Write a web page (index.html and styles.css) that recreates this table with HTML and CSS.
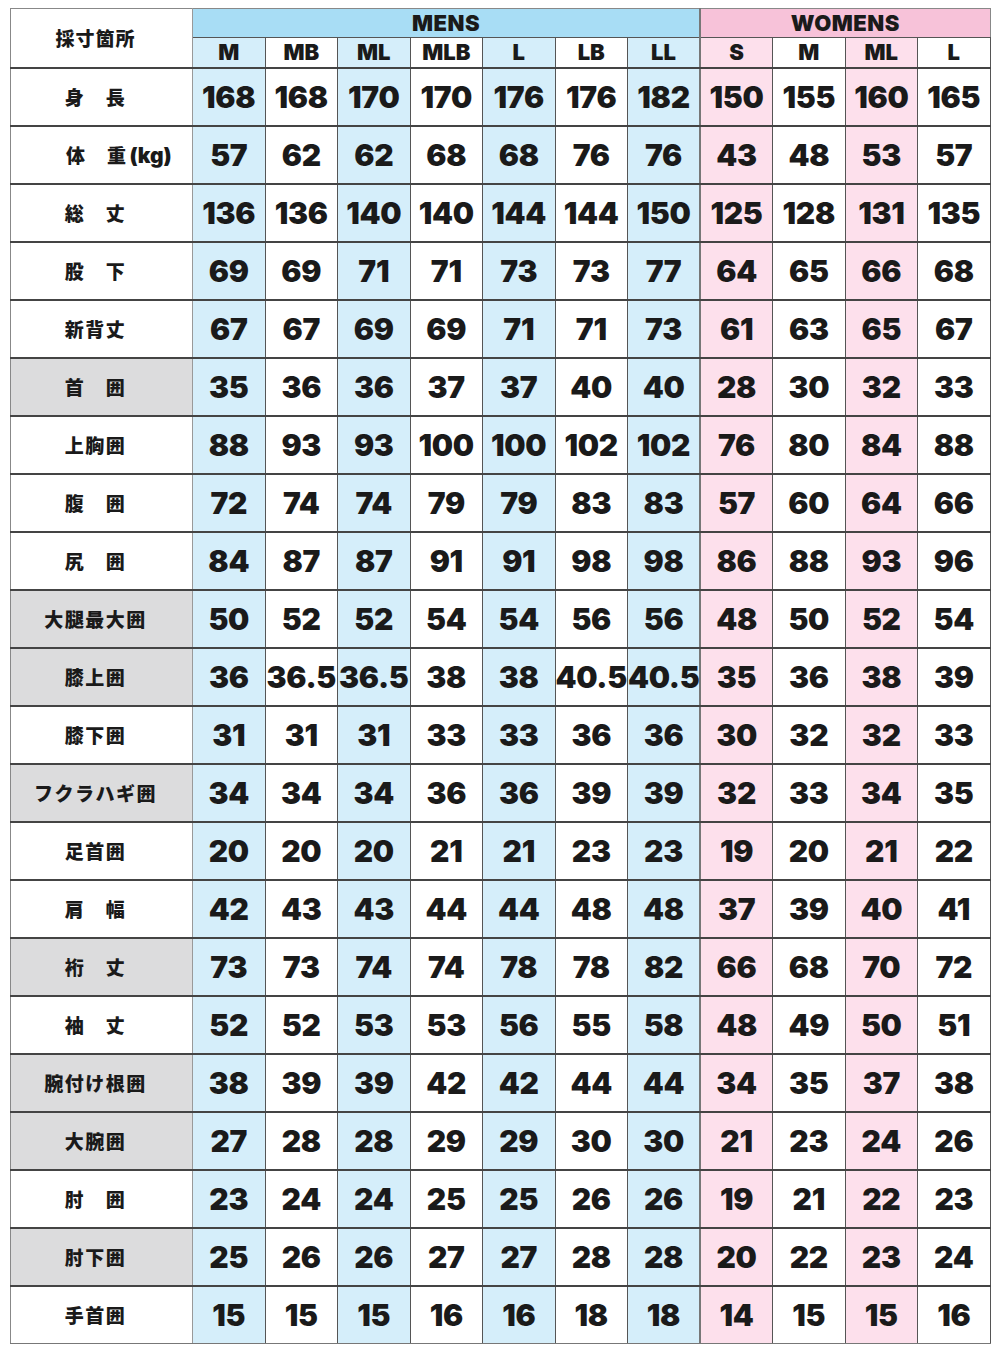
FILE: index.html
```html
<!DOCTYPE html>
<html lang="ja">
<head>
<meta charset="utf-8">
<title>サイズ表</title>
<link rel="stylesheet" href="styles.css">
</head>
<body>
<table class="size-table">
  <colgroup>
    <col class="c-label">
    <col span="11" class="c-size">
  </colgroup>
  <thead>
    <tr class="group-row">
      <th rowspan="2" class="corner">採寸箇所</th>
      <th colspan="7" class="mens">MENS</th>
      <th colspan="4" class="womens">WOMENS</th>
    </tr>
    <tr class="size-row">
      <th>M</th><th>MB</th><th>ML</th><th>MLB</th><th>L</th><th>LB</th><th>LL</th>
      <th>S</th><th>M</th><th>ML</th><th>L</th>
    </tr>
  </thead>
  <tbody>
    <tr><th>身　長</th><td>168</td><td>168</td><td>170</td><td>170</td><td>176</td><td>176</td><td>182</td><td>150</td><td>155</td><td>160</td><td>165</td></tr>
    <tr><th class="weight">体　重<span class="unit">(kg)</span></th><td>57</td><td>62</td><td>62</td><td>68</td><td>68</td><td>76</td><td>76</td><td>43</td><td>48</td><td>53</td><td>57</td></tr>
    <tr><th>総　丈</th><td>136</td><td>136</td><td>140</td><td>140</td><td>144</td><td>144</td><td>150</td><td>125</td><td>128</td><td>131</td><td>135</td></tr>
    <tr><th>股　下</th><td>69</td><td>69</td><td>71</td><td>71</td><td>73</td><td>73</td><td>77</td><td>64</td><td>65</td><td>66</td><td>68</td></tr>
    <tr><th>新背丈</th><td>67</td><td>67</td><td>69</td><td>69</td><td>71</td><td>71</td><td>73</td><td>61</td><td>63</td><td>65</td><td>67</td></tr>
    <tr class="grey"><th>首　囲</th><td>35</td><td>36</td><td>36</td><td>37</td><td>37</td><td>40</td><td>40</td><td>28</td><td>30</td><td>32</td><td>33</td></tr>
    <tr><th>上胸囲</th><td>88</td><td>93</td><td>93</td><td>100</td><td>100</td><td>102</td><td>102</td><td>76</td><td>80</td><td>84</td><td>88</td></tr>
    <tr><th>腹　囲</th><td>72</td><td>74</td><td>74</td><td>79</td><td>79</td><td>83</td><td>83</td><td>57</td><td>60</td><td>64</td><td>66</td></tr>
    <tr><th>尻　囲</th><td>84</td><td>87</td><td>87</td><td>91</td><td>91</td><td>98</td><td>98</td><td>86</td><td>88</td><td>93</td><td>96</td></tr>
    <tr class="grey"><th>大腿最大囲</th><td>50</td><td>52</td><td>52</td><td>54</td><td>54</td><td>56</td><td>56</td><td>48</td><td>50</td><td>52</td><td>54</td></tr>
    <tr class="grey"><th>膝上囲</th><td>36</td><td>36.5</td><td>36.5</td><td>38</td><td>38</td><td>40.5</td><td>40.5</td><td>35</td><td>36</td><td>38</td><td>39</td></tr>
    <tr><th>膝下囲</th><td>31</td><td>31</td><td>31</td><td>33</td><td>33</td><td>36</td><td>36</td><td>30</td><td>32</td><td>32</td><td>33</td></tr>
    <tr class="grey"><th>フクラハギ囲</th><td>34</td><td>34</td><td>34</td><td>36</td><td>36</td><td>39</td><td>39</td><td>32</td><td>33</td><td>34</td><td>35</td></tr>
    <tr><th>足首囲</th><td>20</td><td>20</td><td>20</td><td>21</td><td>21</td><td>23</td><td>23</td><td>19</td><td>20</td><td>21</td><td>22</td></tr>
    <tr><th>肩　幅</th><td>42</td><td>43</td><td>43</td><td>44</td><td>44</td><td>48</td><td>48</td><td>37</td><td>39</td><td>40</td><td>41</td></tr>
    <tr class="grey"><th>裄　丈</th><td>73</td><td>73</td><td>74</td><td>74</td><td>78</td><td>78</td><td>82</td><td>66</td><td>68</td><td>70</td><td>72</td></tr>
    <tr><th>袖　丈</th><td>52</td><td>52</td><td>53</td><td>53</td><td>56</td><td>55</td><td>58</td><td>48</td><td>49</td><td>50</td><td>51</td></tr>
    <tr class="grey"><th>腕付け根囲</th><td>38</td><td>39</td><td>39</td><td>42</td><td>42</td><td>44</td><td>44</td><td>34</td><td>35</td><td>37</td><td>38</td></tr>
    <tr class="grey"><th>大腕囲</th><td>27</td><td>28</td><td>28</td><td>29</td><td>29</td><td>30</td><td>30</td><td>21</td><td>23</td><td>24</td><td>26</td></tr>
    <tr><th>肘　囲</th><td>23</td><td>24</td><td>24</td><td>25</td><td>25</td><td>26</td><td>26</td><td>19</td><td>21</td><td>22</td><td>23</td></tr>
    <tr class="grey"><th>肘下囲</th><td>25</td><td>26</td><td>26</td><td>27</td><td>27</td><td>28</td><td>28</td><td>20</td><td>22</td><td>23</td><td>24</td></tr>
    <tr><th>手首囲</th><td>15</td><td>15</td><td>15</td><td>16</td><td>16</td><td>18</td><td>18</td><td>14</td><td>15</td><td>15</td><td>16</td></tr>
  </tbody>
</table>
</body>
</html>
```
FILE: styles.css
```css
html, body {
  margin: 0;
  padding: 0;
  background: #ffffff;
}

body {
  padding: 8px 0 0 10px;
  color: #1a1a1a;
  font-family: "Inter", "DejaVu Sans", sans-serif;
}

.size-table {
  border-collapse: collapse;
  table-layout: fixed;
  width: 980px;
  border: 1px solid #888;
}

.c-label { width: 182px; }
.c-size { width: 72.5px; }

.size-table th,
.size-table td {
  padding: 0;
  text-align: center;
  vertical-align: middle;
  border-right: 1px solid #555;
  border-bottom: 2px solid #444;
}

/* header */
.group-row { height: 29px; }
.size-row { height: 30px; }

.size-table .corner {
  background: #fff;
  font-family: "Noto Sans CJK JP", sans-serif;
  font-weight: 900;
  font-size: 19px;
  letter-spacing: 1px;
  padding-right: 12px;
  border-right: 1px solid #999;
}

.size-table .mens,
.size-table .womens {
  font-weight: 900;
  font-size: 22px;
  letter-spacing: 0.5px;
  border-bottom: 1px solid #555;
}
.size-table .mens { background: #a8ddf5; border-right: 2px solid #777; }
.size-table .womens { background: #f7c2d9; border-right: 1px solid #888; }

.size-row th {
  font-weight: 900;
  font-size: 22px;
  background: #fff;
}
.size-row th:nth-child(1),
.size-row th:nth-child(3),
.size-row th:nth-child(5),
.size-row th:nth-child(7) { background: #d5eefa; }
.size-row th:nth-child(8),
.size-row th:nth-child(10) { background: #fde0ec; }
.size-table .size-row th:nth-child(7) { border-right: 2px solid #777; }

/* body */
tbody tr { height: 58px; }

.size-table tbody th {
  background: #fff;
  font-family: "Noto Sans CJK JP", sans-serif;
  font-weight: 900;
  font-size: 19px;
  letter-spacing: 1.5px;
  padding-right: 12px;
  border-right: 1px solid #999;
  white-space: nowrap;
}
.size-table tbody tr.grey th { background: #dcdcdd; }

.size-table tbody th.weight {
  text-align: left;
  padding-left: 55px;
  padding-right: 0;
  letter-spacing: 1.5px;
}
.unit {
  font-family: "Inter", sans-serif;
  font-size: 21px;
  letter-spacing: 0;
  margin-left: 2px;
}

.size-table tbody td {
  font-weight: 900;
  font-size: 30px;
  letter-spacing: -0.3px;
  background: #fff;
}
.size-table tbody td:nth-child(2),
.size-table tbody td:nth-child(4),
.size-table tbody td:nth-child(6),
.size-table tbody td:nth-child(8) { background: #d5eefa; }
.size-table tbody td:nth-child(9),
.size-table tbody td:nth-child(11) { background: #fde0ec; }
.size-table tbody td:nth-child(8) { border-right: 2px solid #777; }

.size-table tbody tr:last-child th,
.size-table tbody tr:last-child td { border-bottom: 1px solid #777; }
```
